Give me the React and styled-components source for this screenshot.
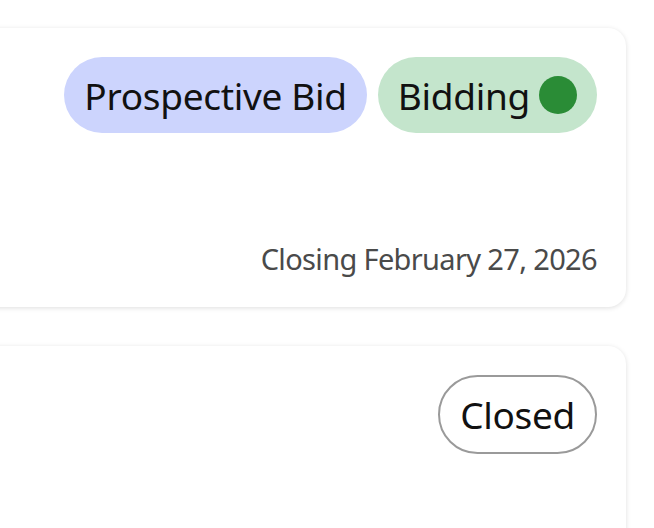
import React from 'react';
import styled, { createGlobalStyle } from 'styled-components';

const Global = createGlobalStyle`
  html, body {
    margin: 0;
    padding: 0;
    background: #fff;
    overflow: hidden;
  }
  body {
    font-family: "Noto Sans", "Open Sans", sans-serif;
    color: #111;
  }
`;

const Page = styled.div`
  width: 654px;
  height: 528px;
  overflow: hidden;
  display: flex;
  flex-direction: column;
  align-items: flex-end;
  gap: 39px;
  padding: 28px 28px 0 0;
  box-sizing: border-box;
`;

const Card = styled.div`
  flex: none;
  width: 760px;
  height: ${p => p.height || 279}px;
  box-sizing: border-box;
  background: #fff;
  border-radius: 18px;
  box-shadow: 0 1px 5px rgba(0, 0, 0, 0.13);
  padding: 29px 29px 30px;
  display: flex;
  flex-direction: column;
  align-items: flex-end;
`;

const Tags = styled.div`
  display: flex;
  gap: 11px;
`;

const Pill = styled.span`
  display: inline-flex;
  align-items: center;
  gap: 9px;
  height: ${p => (p.outline ? 79 : 76)}px;
  box-sizing: border-box;
  padding: 0 20px;
  border-radius: 40px;
  font-size: 37px;
  letter-spacing: -0.3px;
  background: ${p => p.bg || '#fff'};
  border: ${p => (p.outline ? '2px solid #9a9a9a' : 'none')};
  color: #111;
`;

const Dot = styled.span`
  width: 38px;
  height: 38px;
  border-radius: 50%;
  background: #2a8c36;
`;

const Closing = styled.div`
  margin-top: auto;
  font-size: 29px;
  line-height: 36px;
  color: #4a4a4a;
  letter-spacing: -0.65px;
`;

export default function App() {
  return (
    <>
      <Global />
      <Page>
        <Card>
          <Tags>
            <Pill bg="#ccd4fd">Prospective Bid</Pill>
            <Pill bg="#c4e5cc">
              Bidding
              <Dot />
            </Pill>
          </Tags>
          <Closing>Closing February 27, 2026</Closing>
        </Card>
        <Card height={300}>
          <Tags>
            <Pill outline>Closed</Pill>
          </Tags>
        </Card>
      </Page>
    </>
  );
}
